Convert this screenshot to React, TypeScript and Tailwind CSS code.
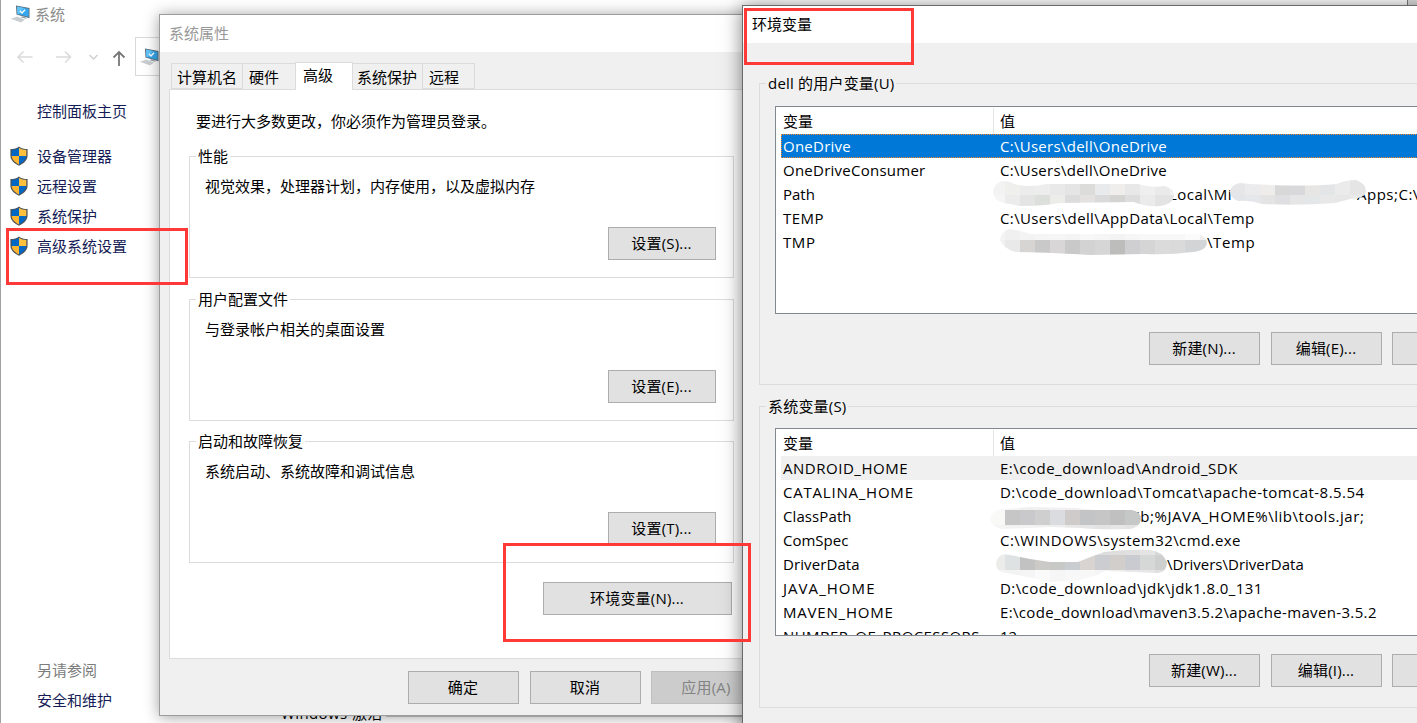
import React from 'react';

interface Variable {
  name: string;
  nameClass?: string;
  value: React.ReactNode;
  valueClass?: string;
}

const userVariables: Variable[] = [
  {
    name: 'OneDrive',
    nameClass: 'tracking-[0.25px]',
    value: 'C:\\Users\\dell\\OneDrive',
    valueClass: 'tracking-[0.28px]'
  },
  {
    name: 'OneDriveConsumer',
    nameClass: 'tracking-[0.25px]',
    value: 'C:\\Users\\dell\\OneDrive',
    valueClass: 'tracking-[0.28px]'
  },
  {
    name: 'Path',
    value: (
      <>
        <span className="w-[357px] shrink-0 pl-[169px] tracking-[0.5px]">Local\Mi</span>
        <span className="tracking-[0.5px]">Apps;C:\</span>
      </>
    )
  },
  {
    name: 'TEMP',
    nameClass: 'tracking-[0.5px]',
    value: 'C:\\Users\\dell\\AppData\\Local\\Temp',
    valueClass: 'tracking-[0.38px]'
  },
  {
    name: 'TMP',
    nameClass: 'tracking-[0.6px]',
    value: <span className="pl-[207px]">\Temp</span>,
    valueClass: 'tracking-[0.6px]'
  }
];

const systemVariables: Variable[] = [
  {
    name: 'ANDROID_HOME',
    nameClass: 'tracking-[0.52px]',
    value: 'E:\\code_download\\Android_SDK',
    valueClass: 'tracking-[0.5px]'
  },
  {
    name: 'CATALINA_HOME',
    nameClass: 'tracking-[0.78px]',
    value: 'D:\\code_download\\Tomcat\\apache-tomcat-8.5.54',
    valueClass: 'tracking-[0.45px]'
  },
  {
    name: 'ClassPath',
    nameClass: 'tracking-[0.1px]',
    value: <span className="pl-[136px]">ib;%JAVA_HOME%\lib\tools.jar;</span>,
    valueClass: 'tracking-[0.53px]'
  },
  { name: 'ComSpec', value: 'C:\\WINDOWS\\system32\\cmd.exe', valueClass: 'tracking-[0.43px]' },
  { name: 'DriverData', nameClass: 'tracking-[0.1px]', value: <span className="pl-[167px]">\Drivers\DriverData</span> },
  {
    name: 'JAVA_HOME',
    nameClass: 'tracking-[1.05px]',
    value: 'D:\\code_download\\jdk\\jdk1.8.0_131',
    valueClass: 'tracking-[0.43px]'
  },
  {
    name: 'MAVEN_HOME',
    nameClass: 'tracking-[0.8px]',
    value: 'E:\\code_download\\maven3.5.2\\apache-maven-3.5.2',
    valueClass: 'tracking-[0.35px]'
  },
  { name: 'NUMBER_OF_PROCESSORS', nameClass: 'tracking-[0.4px]', value: '12' }
];

const sidebarLinks = ['设备管理器', '远程设置', '系统保护', '高级系统设置'];

interface Smudge {
  id: string;
  path: string;
  x: number;
  y: number;
  rows: string[];
}

// Each row is a strip of 15px tiles, clipped by the brush outline
const userSmudges: Smudge[] = [
  {
    id: 'path-start',
    path: 'M1003 181 Q1010 181 1014 184 Q1030 188 1046 184 L1138 184 Q1150 188 1165 186 Q1174 189 1174 196 Q1173 204 1160 206 Q1145 207 1134 202 L1060 203 Q1045 206 1020 206 Q1010 204 1003 203 Q993 200 993 191 Q995 182 1003 181Z',
    x: 990,
    y: 180,
    rows: [
      'f3f3f3 efefee ececec ededee e9e9e9 e5e5e5 dcdcda e8eaec efeeec e8e8e8 efefef eaeaea f0f0f0',
      'f5f5f5 ececec e4e4e4 dddfdd ececea dcdcdc e4e2e1 dadada d4d4d2 dddddd ebebeb e3e3e3 e3e3e3'
    ]
  },
  {
    id: 'path-middle',
    path: 'M1240 183 L1250 184 Q1300 187 1337 184 Q1345 180 1356 180 Q1366 183 1366 192 Q1364 199 1350 199 L1335 203 Q1300 206 1262 204 Q1250 200 1238 201 Q1230 198 1230 191 Q1232 184 1240 183Z',
    x: 1230,
    y: 180,
    rows: [
      'e6e6e8 ebebee efedec d8d8d8 d9d9dc e8e6e4 e3e6e6 ebebeb e5e5e5 e5e5e5',
      'e4e5e8 e6e7ea e4e4e4 dfdfe2 e6e6e6 e4e7e7 e8e8e8 e7e7e7 eaeaea eaeaea'
    ]
  },
  {
    id: 'tmp',
    path: 'M1010 229 Q1022 231 1030 234 L1198 234 Q1207 237 1207 243 Q1206 251 1192 252 Q1170 255 1145 254 L1090 255 Q1040 252 1015 252 Q1003 248 1000 240 Q1001 231 1010 229Z',
    x: 990,
    y: 225,
    rows: [
      'f4f4f4 f0f0f0 f3f3f3 f5f5f5 f6f6f6 f4f4f4 f8f8f8 f6f6f6 f3f3f3 f6f6f6 f8f8f8 f8f8f8 f8f8f8 fbfbfb eeeeee',
      'f1f1f1 e9e9e9 d6d5d3 c9c9c9 d8d6d6 c9c9c9 d3d3d3 d6d6d6 bdbdbc cfcfd1 d5d5d5 dbdbdb dadada d3d4d6 d3d6d8'
    ]
  }
];

const systemSmudges: Smudge[] = [
  {
    id: 'classpath',
    path: 'M1003 509 L1030 507 L1075 508 L1095 510 L1132 510 Q1141 512 1141 519 Q1140 527 1130 529 Q1100 530 1080 528 L1050 527 L1002 529 Q990 526 990 519 Q991 511 1003 509Z',
    x: 990,
    y: 495,
    rows: [
      'f5f5f5 f5f5f5 f0f0f0 f0f0f0 f0f0f0 f0f0f0 f2f2f2 f5f5f5 f5f5f5 f5f5f5 f5f5f5',
      'f9f9f8 c6c6c6 c9c9cb cfcfcf dadce0 cfcbca c3c4c6 c6c6c6 c0c0c0 c6c8c8 c6c8c8',
      'f5f5f5 f2f2f2 f3f3f3 f0f0f0 eeeeee e8e8e8 e6e6e6 e3e3e3 e6e6e6 e3e3e3 e3e3e3'
    ]
  },
  {
    id: 'driverdata',
    path: 'M1005 554 Q1015 556 1030 559 L1050 562 L1078 562 Q1090 557 1104 552 Q1130 549 1150 550 Q1162 551 1167 562 Q1167 572 1158 573 L1105 571 Q1095 577 1078 580 L1050 582 Q1030 577 1005 573 Q996 571 996 564 Q997 555 1005 554Z',
    x: 990,
    y: 540,
    rows: [
      'eeeeee eeeeee eeeeee eeeeee eeeeee eeeeee e8e8e8 dddddd dedede e0e0e0 e4e4e4 d8dada',
      'ececea dfe2e2 c2c2c2 cccac6 c6c9c6 c9cdd0 d9d4d2 cbcdd0 d1cecc c9cbd0 d6d8d8 cdd0ce',
      'f3f3f3 f3f3f3 f5f5f5 fafafa f6f6f6 f8f8f8 f8f8f8 f5f5f5 eeeeee e8e8e8 e6e6e6 e0e0e0'
    ]
  }
];

const Smudges: React.FC<{ items: Smudge[]; left: number; top: number; width: number; height: number }> = ({
  items,
  left,
  top,
  width,
  height
}) => (
  <svg
    className="absolute inset-0"
    width={width}
    height={height}
    viewBox={`${left} ${top} ${width} ${height}`}
    shapeRendering="crispEdges"
  >
    {items.map((item) => (
      <g key={item.id}>
        <clipPath id={item.id}>
          <path d={item.path} />
        </clipPath>
        <g clipPath={`url(#${item.id})`}>
          {item.rows.map((row, r) =>
            row.split(' ').map((color, c) => (
              <rect key={`${r}-${c}`} x={item.x + c * 15} y={item.y + r * 15} width="15" height="15" fill={`#${color}`} />
            ))
          )}
        </g>
      </g>
    ))}
  </svg>
);

const ComputerIcon: React.FC = () => (
  <svg width="20" height="18" viewBox="0 0 20 18" className="shrink-0">
    <path d="M6 0.5 L19.5 3 L19.5 13.2 L6.5 9.5Z" fill="#5d6b76" />
    <path d="M7 1.6 L18.6 3.8 L18.6 12 L7.4 8.9Z" fill="#35a7ee" />
    <path d="M7 1.6 L14 2.9 L8.8 9.2 L7.4 8.9Z" fill="#62c3f8" />
    <path d="M10 6 L12 8 L15 4.8" stroke="#fff" strokeWidth="1.4" fill="none" />
    <path d="M12 11.2 L15 12 L17 14 L11 12.6Z" fill="#9aa4ab" />
    <path d="M0.5 13.8 L7.5 11.4 L15 14.6 L11 17.5Z" fill="#d3d8dc" />
    <path d="M3 13.4 L11.5 16.4 M5.5 12.4 L13.5 15.6" stroke="#b4bbc0" strokeWidth="0.6" />
  </svg>
);

const ShieldIcon: React.FC = () => (
  <svg width="18" height="20" viewBox="0 0 18 20" className="shrink-0">
    <path
      d="M9 0.4 C6.8 2.2 4 3 0.4 3 V9.5 C0.4 14 4 17.5 9 19.7 C14 17.5 17.6 14 17.6 9.5 V3 C14 3 11.2 2.2 9 0.4Z"
      fill="#505457"
    />
    <path d="M9 1.8 C7 3.2 4.6 4 1.7 4.1 V10 H9Z" fill="#0067c5" />
    <path d="M9 1.8 C11 3.2 13.4 4 16.3 4.1 V10 H9Z" fill="#ffc13d" />
    <path d="M1.7 10 C2 13.6 4.8 16.5 9 18.4 V10Z" fill="#ffb52e" />
    <path d="M16.3 10 C16 13.6 13.2 16.5 9 18.4 V10Z" fill="#0067c5" />
  </svg>
);

const PushButton: React.FC<{ label?: string; className: string; disabled?: boolean }> = ({
  label,
  className,
  disabled
}) => (
  <button
    disabled={disabled}
    className={`h-[33px] shrink-0 border pr-px text-center leading-[31px] tracking-[0.2px] ${
      disabled ? 'border-[#bfbfbf] bg-[#cccccc] text-[#838383]' : 'border-[#adadad] bg-[#e1e1e1]'
    } ${className}`}
  >
    {label}
  </button>
);

const SettingsGroup: React.FC<{ title: string; description: string; shortcut: string; className?: string }> = ({
  title,
  description,
  shortcut,
  className = ''
}) => (
  <fieldset className={`flex h-[132px] w-[545px] flex-col border border-[#dcdcdc] ${className}`}>
    <legend className="ml-[6px] h-5 px-[2px] leading-5">{title}</legend>
    <p className="mt-[10px] pl-[15px] leading-5">{description}</p>
    <PushButton label={`设置(${shortcut})...`} className="mt-[31px] mr-[17px] w-[108px] self-end" />
  </fieldset>
);

const VariableGroup: React.FC<{
  title: string;
  variables: Variable[];
  selectedClass: string;
  listClass: string;
  smudges: React.ReactNode;
  shortcuts: string[];
}> = ({ title, variables, selectedClass, listClass, smudges, shortcuts }) => (
  <fieldset className="h-[312px] w-[760px] border border-[#dcdcdc]">
    <legend className="ml-[6px] h-5 px-[2px] leading-5 tracking-[0.2px]">{title}</legend>
    <div
      className={`relative ml-[15px] h-[208px] w-[730px] overflow-hidden border border-[#828790] bg-white pl-[5px] ${listClass}`}
    >
      <div className="flex h-[27px] leading-[29px]">
        <div className="mt-px h-[26px] w-[213px] border-r border-[#e5e5e5] pl-[2px] leading-[27px]">变量</div>
        <div className="pl-[6px]">值</div>
      </div>
      {variables.map((variable, index) => (
        <div key={variable.name} className={`flex h-6 leading-6 ${index === 0 ? selectedClass : ''}`}>
          <span className={`w-[219px] shrink-0 pl-[2px] ${variable.nameClass ?? ''}`}>{variable.name}</span>
          <span className={`flex whitespace-nowrap ${variable.valueClass ?? ''}`}>{variable.value}</span>
        </div>
      ))}
      {smudges}
    </div>
    <div className="mt-[18px] ml-[389px] flex">
      <PushButton label={`新建(${shortcuts[0]})...`} className="w-[111px]" />
      <PushButton label={`编辑(${shortcuts[1]})...`} className="ml-[11px] w-[111px]" />
      <PushButton className="ml-[10px] w-[111px]" />
    </div>
  </fieldset>
);

const SystemWindow: React.FC = () => (
  <div className="flex h-full w-[1408px] flex-col overflow-hidden border-x border-l-[#a0a0a0] border-r-[#7a7a7a] bg-white pl-[9px]">
    <div className="flex h-[28px] shrink-0 items-center gap-[5px] text-[#8c8c8c]">
      <ComputerIcon />
      <span className="leading-5">系统</span>
    </div>
    <div className="mt-[9px] flex h-[39px] shrink-0 items-center">
      <svg width="125" height="39" viewBox="10 37 125 39" fill="none" className="shrink-0">
        <path d="M32.5 57H18 M23.5 51.5L18 57L23.5 62.5" stroke="#dadada" strokeWidth="1.5" />
        <path d="M56 57H70.5 M65 51.5L70.5 57L65 62.5" stroke="#dadada" strokeWidth="1.5" />
        <path d="M89.5 55L93.5 59L97.5 55" stroke="#d0d0d0" strokeWidth="1.5" />
        <path d="M119 66V52 M113.5 57.5L119 52L124.5 57.5" stroke="#777777" strokeWidth="1.8" />
      </svg>
      <div className="flex h-[39px] w-[1260px] shrink-0 items-center border border-[#d9d9d9] pl-[3px]">
        <ComputerIcon />
      </div>
    </div>
    <nav className="mt-[25px] flex shrink-0 flex-col text-[#151c55]">
      <a className="mb-[20px] pl-[27px] leading-5">控制面板主页</a>
      {sidebarLinks.map((link) => (
        <a key={link} className="flex h-[30px] items-center gap-[9px]">
          <ShieldIcon />
          {link}
        </a>
      ))}
    </nav>
    <div className="mt-[394px] h-[80px] shrink-0 pl-[27px] leading-[30px]">
      <p className="text-[#7c7c7c]">另请参阅</p>
      <div className="flex text-[#151c55]">
        <p className="w-[244px] shrink-0">安全和维护</p>
        <h2 className="mt-[13px] shrink-0 tracking-[0.4px] text-black">Windows 激活</h2>
        <hr className="mt-[31px] ml-[3px] w-[900px] border-[#c8c8c8]" />
      </div>
    </div>
  </div>
);

const PropertiesWindow: React.FC = () => (
  <div className="absolute top-[14px] left-[159px] h-[702px] w-[620px] overflow-visible border border-[#9c9c9c] bg-[#f0f0f0] shadow-[0_1px_14px_rgba(0,0,0,0.38)]">
    <div className="h-[37px] bg-white pl-[9px] leading-[36px] text-[#999999]">系统属性</div>
    <div className="mt-[10px] ml-[11px] flex h-[27px] items-end">
      <div className="h-[26px] w-[72px] border border-[#dcdcdc] pl-[5px] leading-[26px]">计算机名</div>
      <div className="h-[26px] w-[52px] border-t border-[#dcdcdc] pl-[6px] leading-[26px]">硬件</div>
      <div className="relative z-10 -mb-px h-[28px] w-[58px] border border-b-0 border-[#dcdcdc] bg-white pl-[7px] leading-[25px]">
        高级
      </div>
      <div className="h-[26px] w-[69px] border-t border-[#dcdcdc] pl-[4px] leading-[26px] whitespace-nowrap">系统保护</div>
      <div className="h-[26px] w-[53px] border border-[#dcdcdc] pl-[6px] leading-[26px]">远程</div>
    </div>
    <div className="ml-[9px] h-[570px] w-[590px] border border-[#dcdcdc] bg-white pl-[19px]">
      <p className="pt-[21px] pl-[7px] leading-5">要进行大多数更改，你必须作为管理员登录。</p>
      <div className="mt-[15px] flex flex-col">
        <SettingsGroup title="性能" description="视觉效果，处理器计划，内存使用，以及虚拟内存" shortcut="S" />
        <SettingsGroup title="用户配置文件" description="与登录帐户相关的桌面设置" shortcut="E" className="mt-[11px]" />
        <SettingsGroup title="启动和故障恢复" description="系统启动、系统故障和调试信息" shortcut="T" className="mt-[10px]" />
      </div>
      <PushButton label="环境变量(N)..." className="mt-[19px] ml-[354px] w-[189px]" />
    </div>
    <div className="mt-[12px] ml-[248px] flex">
      <PushButton label="确定" className="w-[111px]" />
      <PushButton label="取消" className="ml-[11px] w-[111px]" />
      <PushButton label="应用(A)" className="ml-[10px] w-[111px]" disabled />
    </div>
  </div>
);

const EnvironmentWindow: React.FC = () => (
  <div className="absolute top-[5px] left-[742px] h-[760px] w-[800px] border border-[#6a6a6a] bg-[#f0f0f0] shadow-[0_2px_18px_rgba(0,0,0,0.5)]">
    <div className="h-[37px] bg-white pl-[9px] leading-[36px]">环境变量</div>
    <div className="flex flex-col gap-[11px] pt-[30px] pl-[16px]">
      <VariableGroup
        title="dell 的用户变量(U)"
        variables={userVariables}
        selectedClass="bg-[#0078d7] text-white outline-1 -outline-offset-1 outline-dotted outline-[#ff8728]"
        listClass="mt-[13px]"
        smudges={<Smudges items={userSmudges} left={776} top={107} width={728} height={206} />}
        shortcuts={['N', 'E']}
      />
      <VariableGroup
        title="系统变量(S)"
        variables={systemVariables}
        selectedClass="bg-[#f0f0f0]"
        listClass="mt-[12px]"
        smudges={<Smudges items={systemSmudges} left={776} top={429} width={728} height={206} />}
        shortcuts={['W', 'I']}
      />
    </div>
  </div>
);

const App: React.FC = () => {
  return (
    <div className="relative h-[723px] w-[1417px] overflow-hidden bg-[#dedede] font-['Open_Sans','Noto_Sans_CJK_SC',sans-serif] text-[15px] leading-5 text-black">
      <SystemWindow />
      <PropertiesWindow />
      <EnvironmentWindow />

      {/* Highlight frames */}
      <div className="absolute top-[228px] left-[6px] h-[57px] w-[182px] border-3 border-[#ff3838]" />
      <div className="absolute top-[543px] left-[503px] h-[99px] w-[248px] border-3 border-[#ff3838]" />
      <div className="absolute top-[8px] left-[744px] h-[57px] w-[170px] border-3 border-[#ff3838]" />
    </div>
  );
};

export default App;
